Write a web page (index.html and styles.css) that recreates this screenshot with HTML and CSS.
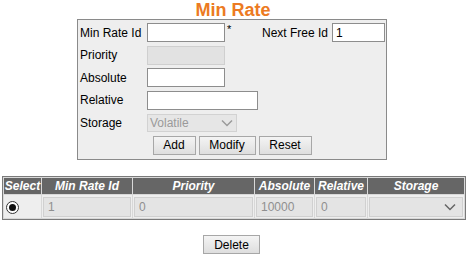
FILE: index.html
```html
<!DOCTYPE html>
<html>
<head>
<meta charset="utf-8">
<link rel="stylesheet" href="styles.css">
</head>
<body>
<h1 class="title">Min Rate</h1>
<div class="form-box">
  <div class="row">
    <span class="lbl">Min Rate Id</span>
    <input class="inp w78" type="text">
    <span class="star">*</span>
    <span class="next-lbl">Next Free Id</span>
    <input class="inp w53" type="text" value="1">
  </div>
  <div class="row">
    <span class="lbl">Priority</span>
    <input class="inp w78 dis" type="text" disabled>
  </div>
  <div class="row">
    <span class="lbl">Absolute</span>
    <input class="inp w78" type="text">
  </div>
  <div class="row">
    <span class="lbl">Relative</span>
    <input class="inp w111" type="text">
  </div>
  <div class="row">
    <span class="lbl">Storage</span>
    <div class="sel sel-form">
      <span class="sel-text">Volatile</span>
      <svg class="chev" width="12" height="8" viewBox="0 0 12 8"><path d="M1 1.5 L6 6.5 L11 1.5" fill="none" stroke="#9a9a9a" stroke-width="1.5"/></svg>
    </div>
  </div>
  <div class="btn-row">
    <button class="btn w43">Add</button>
    <button class="btn w57">Modify</button>
    <button class="btn w53b">Reset</button>
  </div>
</div>
<table class="grid">
  <colgroup>
    <col class="c1"><col class="c2"><col class="c3"><col class="c4"><col class="c5"><col class="c6">
  </colgroup>
  <thead>
    <tr><th>Select</th><th>Min Rate Id</th><th>Priority</th><th>Absolute</th><th>Relative</th><th>Storage</th></tr>
  </thead>
  <tbody>
    <tr>
      <td class="radio-cell"><span class="radio"><span class="dot"></span></span></td>
      <td><div class="cellbox">1</div></td>
      <td><div class="cellbox">0</div></td>
      <td><div class="cellbox">10000</div></td>
      <td><div class="cellbox">0</div></td>
      <td><div class="cellbox sel-cell"><svg class="chev2" width="12" height="8" viewBox="0 0 12 8"><path d="M1 1.5 L6 6.5 L11 1.5" fill="none" stroke="#666" stroke-width="1.5"/></svg></div></td>
    </tr>
  </tbody>
</table>
<div class="del-row"><button class="btn w57">Delete</button></div>
</body>
</html>
```
FILE: styles.css
```css
body {
  margin: 0;
  background: #fff;
  font-family: "Liberation Sans", Arial, sans-serif;
  font-size: 12px;
  color: #000;
}
.title {
  margin: 0 0 -1px 0;
  height: 20px;
  line-height: 20px;
  font-size: 18px;
  font-weight: bold;
  color: #ec7a22;
  text-align: center;
}
.form-box {
  box-sizing: border-box;
  width: 310px;
  margin-left: 77px;
  height: 141px;
  background: #eeeeee;
  border: 1px solid #8a8a8a;
  padding: 3px 1px 0 2px;
  display: flex;
  flex-direction: column;
  gap: 3.6px;
}
.row {
  display: flex;
  align-items: center;
  height: 19px;
}
.lbl {
  width: 67px;
  flex: none;
}
.inp {
  box-sizing: border-box;
  height: 19px;
  border: 1px solid #8d8d8d;
  background: #fff;
  font-family: "Liberation Sans", Arial, sans-serif;
  font-size: 12px;
  padding: 0 3px;
  margin: 0;
  outline: none;
}
.inp.dis {
  background: #e2e2e2;
  border-color: #cfcfcf;
}
.w78 { width: 78px; }
.w53 { width: 53px; }
.w111 { width: 111px; }
.star {
  margin-left: 2px;
  align-self: flex-start;
  font-size: 11px;
  line-height: 12px;
}
.next-lbl {
  margin-left: auto;
  margin-right: 4px;
}
.sel {
  box-sizing: border-box;
  height: 18px;
  display: flex;
  align-items: center;
  justify-content: space-between;
}
.sel-form {
  width: 90px;
  background: #e6e6e6;
  border: 1px solid #d2d2d2;
  padding: 0 3px 0 2px;
  color: #9a9a9a;
}
.btn-row {
  display: flex;
  justify-content: center;
  gap: 3px;
  height: 19px;
  padding-right: 1px;
}
.btn {
  box-sizing: border-box;
  height: 19px;
  padding: 0;
  margin: 0;
  border: 1px solid #a7a7a7;
  background: linear-gradient(#f4f4f4, #dedede);
  font-family: "Liberation Sans", Arial, sans-serif;
  font-size: 12px;
  color: #000;
}
.w43 { width: 43px; }
.w57 { width: 57px; }
.w53b { width: 53px; }
.grid {
  margin: 16px 0 0 2px;
  width: 462px;
  table-layout: fixed;
  border-collapse: separate;
  border-spacing: 1px;
  border: 1px solid #7a7a7a;
  background: #d8d8d8;
}
.c1 { width: 37px; }
.c2 { width: 90px; }
.c3 { width: 121px; }
.c4 { width: 59px; }
.c5 { width: 52px; }
.c6 { width: 96px; }
.grid th {
  height: 16px;
  padding: 0;
  background: #666666;
  color: #fff;
  font-style: italic;
  font-weight: bold;
  font-size: 12px;
  text-align: center;
}
.grid td {
  height: 23px;
  padding: 0;
  background: #eeeeee;
}
.radio-cell {
  text-align: left;
  padding-left: 2px !important;
}
.radio {
  display: inline-flex;
  width: 11px;
  height: 11px;
  border: 1px solid #333;
  border-radius: 50%;
  background: #fff;
  align-items: center;
  justify-content: center;
  vertical-align: middle;
}
.dot {
  width: 7px;
  height: 7px;
  border-radius: 50%;
  background: #111;
}
.cellbox {
  box-sizing: border-box;
  height: 20px;
  margin: 0 1px;
  border: 1px solid #d0d0d0;
  background: #e4e4e4;
  color: #8f8f8f;
  padding: 0 4px;
  line-height: 18px;
}
.sel-cell {
  display: flex;
  align-items: center;
  justify-content: flex-end;
  padding-right: 6px;
}
.del-row {
  display: flex;
  justify-content: center;
  margin-top: 15px;
  padding-right: 3px;
}
```
